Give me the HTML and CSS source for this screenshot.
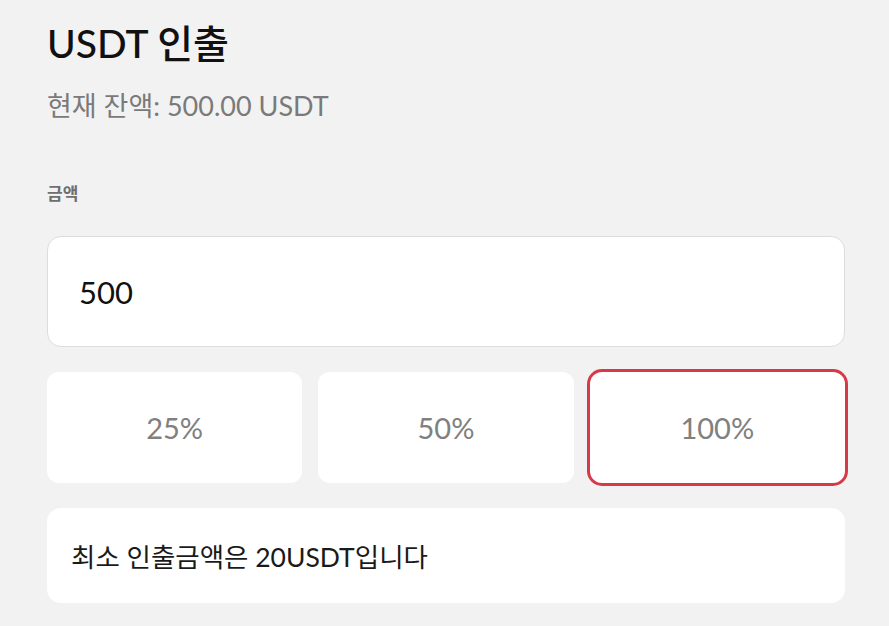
FILE: index.html
```html
<!DOCTYPE html>
<html lang="ko">
<head>
<meta charset="utf-8">
<link rel="stylesheet" href="styles.css">
</head>
<body>
<div class="page">
  <h1 class="title">USDT 인출</h1>
  <p class="balance">현재 잔액: 500.00 USDT</p>
  <label class="label">금액</label>
  <div class="input">500</div>
  <div class="presets">
    <div class="preset">25%</div>
    <div class="preset">50%</div>
    <div class="preset active">100%</div>
  </div>
  <div class="note">최소 인출금액은 20USDT입니다</div>
</div>
</body>
</html>
```
FILE: styles.css
```css
html, body {
  margin: 0;
  background: #f2f2f2;
}
body {
  font-family: Lato, "Noto Sans CJK KR", sans-serif;
  color: #111;
}
.page {
  padding: 18px 44px 0 47px;
}
.title {
  margin: 0;
  font-size: 39px;
  font-weight: 500;
  line-height: 50px;
  color: #111;
}
.balance {
  margin: 21px 0 0;
  font-size: 27px;
  line-height: 34px;
  color: #7a7a7a;
}
.label {
  display: block;
  margin-top: 59px;
  font-size: 17px;
  line-height: 24px;
  font-weight: 600;
  color: #6f6f6f;
}
.input {
  margin-top: 30px;
  height: 111px;
  box-sizing: border-box;
  background: #fff;
  border: 1px solid #dcdcdc;
  border-radius: 14px;
  display: flex;
  align-items: center;
  padding-left: 31px;
  font-size: 31px;
  color: #111;
}
.presets {
  margin-top: 25px;
  display: grid;
  grid-template-columns: repeat(3, 1fr);
  gap: 16px;
}
.preset {
  height: 111px;
  background: #fff;
  border-radius: 12px;
  display: flex;
  align-items: center;
  justify-content: center;
  font-size: 29px;
  color: #808080;
}
.preset.active {
  box-shadow: 0 0 0 3px #d63a47;
}
.note {
  margin-top: 25px;
  height: 95px;
  background: #fff;
  border-radius: 14px;
  display: flex;
  align-items: center;
  padding-left: 24px;
  font-size: 26.5px;
  color: #1a1a1a;
}
```
